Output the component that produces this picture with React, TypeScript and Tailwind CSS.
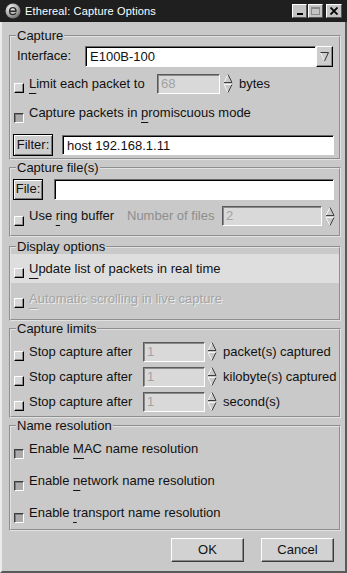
import React from 'react';

function Check({ on }: { on?: boolean }) {
    if (on) {
        return (
            <span className="mt-[9px] w-[10px] h-[10px] shrink-0 border border-t-[#3c3c3c] border-l-[#3c3c3c] border-b-white border-r-white bg-[#ababab] shadow-[inset_1px_1px_0_#7a7a7a]" />
        );
    }
    return (
        <span className="mt-[9px] w-[10px] h-[10px] shrink-0 border border-t-white border-l-white border-b-black border-r-black bg-[#d6d6d6] shadow-[inset_-1px_-1px_0_#8c8c8c]" />
    );
}

function Key({ c }: { c: string }) {
    return <u className="underline underline-offset-[5px] decoration-1">{c}</u>;
}

function Arrows() {
    return (
        <svg width="10" height="21" viewBox="0 0 10 21" className="shrink-0">
            <path d="M5 1.5 L1 9.5" stroke="#f4f4f4" strokeWidth="1" fill="none" />
            <path d="M5 1.5 L9 9.5 L1 9.5" stroke="#3e3e3e" strokeWidth="1" fill="none" />
            <path d="M1 11.5 L9 11.5 M1 11.5 L5 19.5" stroke="#f4f4f4" strokeWidth="1" fill="none" />
            <path d="M9 11.5 L5 19.5" stroke="#3e3e3e" strokeWidth="1" fill="none" />
        </svg>
    );
}

function Spin({ value, width }: { value: string; width: string }) {
    return (
        <div className={`h-[20px] ${width} shrink-0 bg-[#d9d9d9] border border-t-[#5a5a5a] border-l-[#5a5a5a] border-b-white border-r-white shadow-[inset_1px_1px_0_#8a8a8a] pl-[3px] leading-[18px] text-[#a2a2a2]`}>
            {value}
        </div>
    );
}

function Entry({ value, className }: { value?: string; className?: string }) {
    return (
        <div className={`h-[21px] flex-1 min-w-0 bg-white border border-t-[#6a6a6a] border-l-[#6a6a6a] border-b-white border-r-white shadow-[inset_1px_1px_0_#000] pl-[4px] leading-[19px] ${className ?? ''}`}>
            {value}
        </div>
    );
}

function Frame({ title, className, children }: { title: string; className?: string; children: React.ReactNode }) {
    return (
        <fieldset className={`border-2 [border-style:groove] border-[#e2e2e2] px-[3px] ${className ?? ''}`}>
            <legend className="ml-[2px] px-[1px] h-[15px] leading-[15px]">{title}</legend>
            {children}
        </fieldset>
    );
}

function LimitRow({ unit }: { unit: string }) {
    return (
        <div className="h-[25px] flex items-center whitespace-nowrap">
            <Check />
            <span className="ml-[5px] w-[114px] shrink-0">Stop capture after</span>
            <Spin value="1" width="w-[62px]" />
            <span className="ml-[2px] shrink-0"><Arrows /></span>
            <span className="ml-[6px] shrink-0">{unit}</span>
        </div>
    );
}

export default function App() {
    return (
        <div className="w-[347px] h-[573px] flex flex-col bg-[#c9c9c9] text-[13px] text-[#111] font-['Liberation_Sans',Arial,sans-serif] overflow-hidden">
            {/* title bar */}
            <div className="h-[22px] shrink-0 bg-[#1f1f1f] flex items-center pl-[5px] pr-[5px]">
                <svg width="16" height="16" viewBox="0 0 16 16" className="shrink-0">
                    <defs>
                        <radialGradient id="ball" cx="0.35" cy="0.3" r="0.8">
                            <stop offset="0" stopColor="#f2f2f2" />
                            <stop offset="0.6" stopColor="#a8a8a8" />
                            <stop offset="1" stopColor="#5a5a5a" />
                        </radialGradient>
                    </defs>
                    <circle cx="8" cy="8" r="7.5" fill="url(#ball)" />
                    <path d="M4.5 8.2 H11 C11 5.8 9.7 4.6 8 4.6 C5.9 4.6 4.6 6.2 4.6 8.2 C4.6 10.4 6 11.6 8 11.6 C9.3 11.6 10.3 11 10.9 10" stroke="#2a2a2a" strokeWidth="1.4" fill="none" />
                </svg>
                <span className="ml-[4px] text-[11px] tracking-[0.15px] text-white">Ethereal: Capture Options</span>
                <div className="ml-auto flex items-center">
                    <div className="w-[15px] h-[14px] bg-[#c4c4c4] border border-t-white border-l-white border-b-[#555] border-r-[#555] flex items-end justify-center pb-[2px]">
                        <span className="w-[6px] h-[2px] bg-black" />
                    </div>
                    <div className="ml-[1px] w-[15px] h-[14px] bg-[#c4c4c4] border border-t-white border-l-white border-b-[#555] border-r-[#555] flex items-center justify-center">
                        <span className="w-[9px] h-[8px] border border-[#8a8a8a] border-t-2" />
                    </div>
                    <div className="ml-[3px] w-[16px] h-[14px] bg-[#c4c4c4] border border-t-white border-l-white border-b-[#555] border-r-[#555] flex items-center justify-center">
                        <svg width="8" height="8" viewBox="0 0 8 8">
                            <path d="M0.5 0.5 L7.5 7.5 M7.5 0.5 L0.5 7.5" stroke="#000" strokeWidth="1.8" />
                        </svg>
                    </div>
                </div>
            </div>

            {/* body */}
            <div className="flex-1 flex flex-col pt-[6px] pl-[7px] pr-[4px] border-l-2 border-l-[#ececec] border-r-2 border-r-[#5a5a5a] border-b-2 border-b-[#5a5a5a]">
                <Frame title="Capture">
                    <div className="h-[26px] flex items-center">
                        <span className="ml-[3px] w-[68px] shrink-0">Interface:</span>
                        <Entry value="E100B-100" />
                        <div className="mr-[3px] w-[17px] h-[21px] shrink-0 bg-[#cdcdcd] border border-t-white border-l-white border-b-black border-r-black shadow-[inset_-1px_-1px_0_#8a8a8a] flex items-center justify-center">
                            <svg width="9" height="11" viewBox="0 0 9 11">
                                <path d="M0.5 1.5 L4.5 10" stroke="#f4f4f4" strokeWidth="1" fill="none" />
                                <path d="M0.5 1.5 H8.5 L4.5 10" stroke="#333" strokeWidth="1" fill="none" />
                            </svg>
                        </div>
                    </div>
                    <div className="h-[29px] flex items-center">
                        <Check />
                        <span className="ml-[5px] w-[128px] shrink-0"><Key c="L" />imit each packet to</span>
                        <Spin value="68" width="w-[63px]" />
                        <span className="ml-[3px]"><Arrows /></span>
                        <span className="ml-[6px]">bytes</span>
                    </div>
                    <div className="h-[30px] flex items-center">
                        <Check on />
                        <span className="ml-[5px]">Capture packets in <Key c="p" />romiscuous mode</span>
                    </div>
                    <div className="h-[30px] flex items-end pb-[2px]">
                        <div className="-ml-[1px] w-[40px] h-[22px] shrink-0 bg-[#cdcdcd] border border-black shadow-[inset_1px_1px_0_#fff,inset_-1px_-1px_0_#7a7a7a] flex items-center justify-center">
                            Filter:
                        </div>
                        <Entry value="host 192.168.1.11" className="ml-[9px] mr-[2px] mb-[1px] !h-[20px]" />
                    </div>
                </Frame>

                <Frame title="Capture file(s)" className="pb-[6px]">
                    <div className="h-[28px] flex items-center">
                        <div className="-ml-[1px] w-[30px] h-[21px] shrink-0 bg-[#cdcdcd] border border-black shadow-[inset_1px_1px_0_#fff,inset_-1px_-1px_0_#7a7a7a] flex items-center justify-center">
                            File:
                        </div>
                        <Entry className="ml-[11px] mr-[2px]" />
                    </div>
                    <div className="h-[26px] flex items-center">
                        <Check />
                        <span className="ml-[5px] w-[98px] shrink-0">Use <Key c="r" />ing buffer</span>
                        <span className="w-[95px] shrink-0 text-[#8e8e8e]">Number of files</span>
                        <Spin value="2" width="w-[100px]" />
                        <span className="ml-[3px]"><Arrows /></span>
                    </div>
                </Frame>

                <Frame title="Display options" className="mt-[2px] pb-[5px]">
                    <div className="h-[29px] -mx-[3px] px-[3px] bg-[#dedede] flex items-center">
                        <Check />
                        <span className="ml-[5px]"><Key c="U" />pdate list of packets in real time</span>
                    </div>
                    <div className="h-[31px] flex items-center">
                        <Check />
                        <span className="ml-[5px] text-[#a4a4a4] [text-shadow:1px_1px_0_#ececec]"><Key c="A" />utomatic scrolling in live capture</span>
                    </div>
                </Frame>

                <Frame title="Capture limits" className="pt-[3px] pb-[2px]">
                    <LimitRow unit="packet(s) captured" />
                    <LimitRow unit="kilobyte(s) captured" />
                    <LimitRow unit="second(s)" />
                </Frame>

                <Frame title="Name resolution">
                    <div className="h-[32px] flex items-center">
                        <Check on />
                        <span className="ml-[5px]">Enable <Key c="M" />AC name resolution</span>
                    </div>
                    <div className="h-[32px] flex items-center">
                        <Check on />
                        <span className="ml-[5px]">Enable <Key c="n" />etwork name resolution</span>
                    </div>
                    <div className="h-[32px] flex items-center">
                        <Check on />
                        <span className="ml-[5px]">Enable <Key c="t" />ransport name resolution</span>
                    </div>
                </Frame>

                <div className="mt-[7px] mr-[7px] flex justify-end gap-[17px]">
                    <div className="w-[73px] h-[24px] bg-[#d2d2d2] border border-t-white border-l-white border-b-[#3a3a3a] border-r-[#3a3a3a] shadow-[inset_-1px_-1px_0_#8a8a8a] flex items-center justify-center">
                        OK
                    </div>
                    <div className="w-[73px] h-[24px] bg-[#d2d2d2] border border-t-white border-l-white border-b-[#3a3a3a] border-r-[#3a3a3a] shadow-[inset_-1px_-1px_0_#8a8a8a] flex items-center justify-center">
                        Cancel
                    </div>
                </div>
            </div>
        </div>
    );
}
